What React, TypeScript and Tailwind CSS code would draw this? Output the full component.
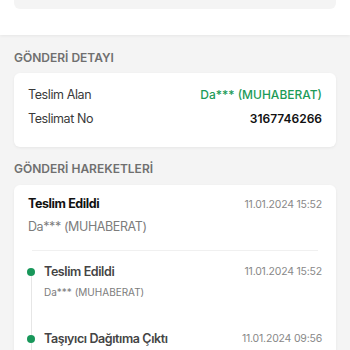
import React from 'react'

const font = { fontFamily: 'Inter, "Noto Sans", sans-serif' }

type Move = { title: string; sub?: string; date: string }

const moves: Move[] = [
  { title: 'Teslim Edildi', sub: 'Da*** (MUHABERAT)', date: '11.01.2024 15:52' },
  { title: 'Taşıyıcı Dağıtıma Çıktı', date: '11.01.2024 09:56' },
]

const Row = ({ label, children }: { label: string; children: React.ReactNode }) => (
  <div className="flex items-center justify-between h-[20px] leading-[20px]">
    <span className="text-[12.5px] tracking-[-0.4px] text-[#3a3a3a]">{label}</span>
    {children}
  </div>
)

export default function App() {
  return (
    <div className="w-[350px] h-[350px] overflow-hidden bg-[#f4f4f4]" style={font}>
      {/* top summary (cut off) */}
      <div className="bg-white h-[35px] shadow-[0_1px_3px_rgba(0,0,0,0.06)] relative">
        <div className="mx-[14px] h-[9px] bg-[#f4f4f4] rounded-b-[6px]" />
      </div>

      <div className="px-[14px] pt-[15px]">
        <h2 className="text-[12px] leading-[16px] font-semibold text-[#6f6f6f]">
          GÖNDERİ DETAYI
        </h2>
        <div className="mt-[7px] bg-white rounded-[6px] shadow-[0_1px_3px_rgba(0,0,0,0.06)] px-[14px] pt-[12px] pb-[18px]">
          <Row label="Teslim Alan">
            <span className="text-[12px] font-medium text-[#1c9b58]">Da*** (MUHABERAT)</span>
          </Row>
          <div className="mt-[3.5px]">
            <Row label="Teslimat No">
              <span className="text-[12px] font-semibold text-[#111]">3167746266</span>
            </Row>
          </div>
        </div>

        <h2 className="mt-[14.5px] text-[12px] leading-[16px] font-semibold text-[#6f6f6f]">
          GÖNDERİ HAREKETLERİ
        </h2>
        <div className="mt-[7.5px] bg-white rounded-t-[6px] shadow-[0_1px_3px_rgba(0,0,0,0.06)] px-[14px] pt-[10px] pb-[20px]">
          <div className="flex items-center justify-between h-[20px]">
            <span className="text-[12.5px] tracking-[-0.4px] font-bold text-[#111]">Teslim Edildi</span>
            <span className="text-[10.5px] tracking-[-0.2px] text-[#888]">11.01.2024 15:52</span>
          </div>
          <div className="mt-[2.5px] h-[20px] leading-[20px] text-[12.5px] tracking-[-0.4px] text-[#7c7c7c]">
            Da*** (MUHABERAT)
          </div>
          <div className="mt-[13px] mx-[4px] h-px bg-[#f0f0f0]" />

          <div className="mt-[11px]">
            {moves.map((m, i) => (
              <div key={i} className="flex h-[67px]">
                <div className="relative w-[16px] shrink-0">
                  <span className="absolute left-[-1px] top-[6px] w-[8px] h-[8px] rounded-full bg-[#18975a]" />
                  <span className="absolute left-[2.5px] top-[14px] bottom-[-6px] w-px bg-[#e6e6e6]" />
                </div>
                <div className="flex-1">
                  <div className="flex items-center justify-between h-[20px]">
                    <span className="text-[12.5px] tracking-[-0.4px] font-semibold text-[#444]">{m.title}</span>
                    <span className="text-[10.5px] tracking-[-0.2px] text-[#888]">{m.date}</span>
                  </div>
                  {m.sub && (
                    <div className="text-[10px] leading-[16px] mt-[2px] text-[#7c7c7c]">{m.sub}</div>
                  )}
                </div>
              </div>
            ))}
          </div>
        </div>
      </div>
    </div>
  )
}
